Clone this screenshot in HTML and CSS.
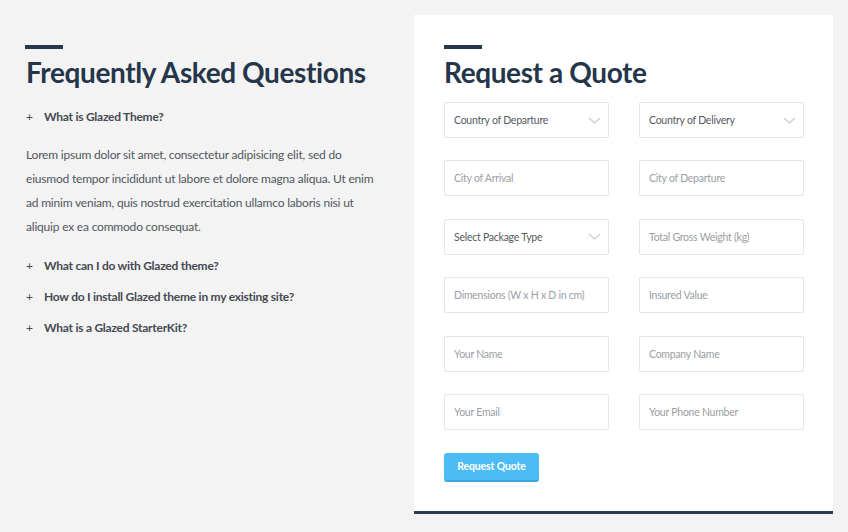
FILE: index.html
```html
<!DOCTYPE html>
<html lang="en">
<head>
    <meta charset="UTF-8">
    <meta name="viewport" content="width=device-width, initial-scale=1.0">
    <title>Request a Quote</title>
    <link rel="stylesheet" href="styles.css">
</head>
<body>
    <div class="page">
        <div class="faq">
            <div class="accent"></div>
            <h2>Frequently Asked Questions</h2>
            <div class="faq-item open"><span class="plus">+</span>What is Glazed Theme?</div>
            <p class="answer">Lorem ipsum dolor sit amet, consectetur adipisicing elit, sed do eiusmod tempor incididunt ut labore et dolore magna aliqua. Ut enim ad minim veniam, quis nostrud exercitation ullamco laboris nisi ut aliquip ex ea commodo consequat.</p>
            <div class="faq-item"><span class="plus">+</span>What can I do with Glazed theme?</div>
            <div class="faq-item"><span class="plus">+</span>How do I install Glazed theme in my existing site?</div>
            <div class="faq-item"><span class="plus">+</span>What is a Glazed StarterKit?</div>
        </div>

        <div class="quote">
            <div class="accent"></div>
            <h2>Request a Quote</h2>
            <form class="quote-form">
                <div class="field select">Country of Departure
                    <svg class="chevron" width="13" height="7" viewBox="0 0 13 7"><path d="M1 1l5.5 5 5.5-5" fill="none" stroke="#c9ccd0" stroke-width="1.2"/></svg>
                </div>
                <div class="field select">Country of Delivery
                    <svg class="chevron" width="13" height="7" viewBox="0 0 13 7"><path d="M1 1l5.5 5 5.5-5" fill="none" stroke="#c9ccd0" stroke-width="1.2"/></svg>
                </div>
                <input class="field" type="text" placeholder="City of Arrival">
                <input class="field" type="text" placeholder="City of Departure">
                <div class="field select">Select Package Type
                    <svg class="chevron" width="13" height="7" viewBox="0 0 13 7"><path d="M1 1l5.5 5 5.5-5" fill="none" stroke="#c9ccd0" stroke-width="1.2"/></svg>
                </div>
                <input class="field" type="text" placeholder="Total Gross Weight (kg)">
                <input class="field" type="text" placeholder="Dimensions (W x H x D in cm)">
                <input class="field" type="text" placeholder="Insured Value">
                <input class="field" type="text" placeholder="Your Name">
                <input class="field" type="text" placeholder="Company Name">
                <input class="field" type="text" placeholder="Your Email">
                <input class="field" type="text" placeholder="Your Phone Number">
            </form>
            <button class="submit" type="button">Request Quote</button>
        </div>
    </div>
</body>
</html>
```

FILE: styles.css
```css
body {
    margin: 0;
    background: #f3f3f4;
    font-family: Lato, 'Noto Sans', sans-serif;
    color: #555a60;
}
.page {
    display: flex;
    gap: 28px;
    padding: 15px 15px 0 26px;
}
.faq {
    width: 360px;
    padding-top: 30px;
}
.accent {
    width: 38px;
    height: 4px;
    background: #25364a;
}
.faq .accent {
    margin-left: -1px;
}
h2 {
    margin: 5px 0 0;
    font-size: 28px;
    line-height: 36px;
    font-weight: 700;
    color: #25364a;
    letter-spacing: -0.4px;
    white-space: nowrap;
}
.faq h2 {
    margin-bottom: 19px;
}
.faq-item {
    font-size: 12px;
    font-weight: 700;
    line-height: 16px;
    color: #454a52;
    letter-spacing: -0.25px;
    margin-bottom: 15px;
}
.plus {
    display: inline-block;
    width: 18px;
    font-weight: 400;
}
.answer {
    margin: 18px 0 19px;
    font-size: 12px;
    line-height: 24px;
    letter-spacing: -0.2px;
    color: #51565c;
}
.quote {
    width: 359px;
    background: #fff;
    padding: 30px 30px 29px;
    border-bottom: 3px solid #2b3b50;
}
.quote h2 {
    margin-bottom: 12px;
}
.quote-form {
    display: grid;
    grid-template-columns: 165px 165px;
    column-gap: 30px;
    row-gap: 22.4px;
}
.field {
    box-sizing: border-box;
    height: 36px;
    width: 165px;
    margin: 0;
    padding: 0 9px;
    border: 1px solid #e3e5e8;
    border-radius: 2px;
    background: #fff;
    font-family: inherit;
    font-size: 10.5px;
    letter-spacing: -0.25px;
    color: #555a60;
    outline: none;
}
.field::placeholder {
    color: #9a9ea4;
}
.select {
    display: flex;
    align-items: center;
    justify-content: space-between;
    padding-right: 7px;
}
.submit {
    margin-top: 23px;
    width: 95px;
    height: 29px;
    border: none;
    border-bottom: 2px solid #3aa8e0;
    border-radius: 3px;
    background: #4dbcf5;
    color: #fff;
    font-family: inherit;
    font-size: 10.5px;
    font-weight: 700;
    letter-spacing: -0.15px;
    cursor: pointer;
}
```
